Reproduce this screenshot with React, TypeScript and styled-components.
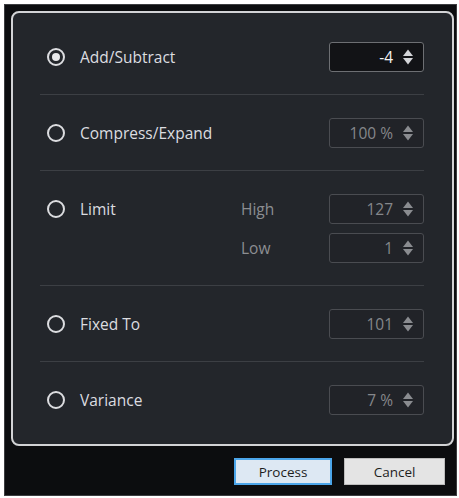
import React from 'react';
import styled, { createGlobalStyle } from 'styled-components';

const GlobalStyle = createGlobalStyle`
  html, body {
    margin: 0;
    padding: 0;
    background: #ffffff;
  }
  body {
    font-family: 'Open Sans', 'Noto Sans', sans-serif;
  }
`;

const Window = styled.div`
  box-sizing: border-box;
  margin: 4px 0 0 4px;
  width: 453px;
  height: 492px;
  background: #0c0d0f;
  border: 1px solid #3c3d40;
  padding: 6px 2px 0 6px;
  display: flex;
  flex-direction: column;
`;

const Panel = styled.div`
  box-sizing: border-box;
  height: 435px;
  background: #23262b;
  border: 2px solid #d2d3d5;
  border-radius: 8px;
  padding: 6px 28px 0 27px;
  display: flex;
  flex-direction: column;
`;

const Section = styled.div<{ $last?: boolean }>`
  display: flex;
  align-items: flex-start;
  padding: 23px 0 22px 0;
  border-bottom: ${p => (p.$last ? 'none' : '1px solid #3c3f44')};
`;

const Choice = styled.label`
  flex: 1;
  height: 30px;
  display: flex;
  align-items: center;
  gap: 15px;
  padding-left: 7px;
  font-size: 15.5px;
  color: #dcdde0;
`;

const Radio = styled.span<{ $checked?: boolean }>`
  box-sizing: border-box;
  width: 18px;
  height: 18px;
  border-radius: 50%;
  border: 2px solid #dcdde0;
  display: flex;
  align-items: center;
  justify-content: center;

  &::after {
    content: '';
    width: 8px;
    height: 8px;
    border-radius: 50%;
    background: ${p => (p.$checked ? '#e8e9eb' : 'transparent')};
  }
`;

const Fields = styled.div`
  display: grid;
  grid-template-columns: 88px 95px;
  row-gap: 9px;
  align-items: center;
`;

const FieldLabel = styled.span`
  font-size: 15.5px;
  color: #8c8e92;
`;

const Spin = styled.div<{ $active?: boolean }>`
  box-sizing: border-box;
  width: 95px;
  height: 30px;
  border-radius: 3px;
  border: 1px solid ${p => (p.$active ? '#6d6f73' : '#4a4c51')};
  background: ${p => (p.$active ? '#121316' : '#212328')};
  display: flex;
  align-items: center;
  justify-content: flex-end;
  gap: 10px;
  padding-right: 10px;
  font-size: 15.5px;
  color: ${p => (p.$active ? '#f2f2f2' : '#85878b')};
`;

const Arrows = styled.svg<{ $active?: boolean }>`
  width: 10px;
  height: 16px;
  fill: ${p => (p.$active ? '#d4d5d8' : '#8a8c90')};
`;

const Footer = styled.div`
  flex: 1;
  display: flex;
  justify-content: flex-end;
  align-items: flex-start;
  gap: 12px;
  padding: 12px 9px 0 0;
`;

const Button = styled.button<{ $primary?: boolean }>`
  box-sizing: border-box;
  width: ${p => (p.$primary ? '98px' : '101px')};
  height: 27px;
  font-family: 'Open Sans', 'Noto Sans', sans-serif;
  font-size: 13.5px;
  color: #1e1e1e;
  background: ${p => (p.$primary ? '#dde8f3' : '#e4e4e4')};
  border: ${p => (p.$primary ? '2px solid #4ca6ea' : '1px solid #bdbdbd')};
  border-radius: 0;
  padding: 0;
`;

const SpinArrows: React.FC<{ active?: boolean }> = ({ active }) => (
  <Arrows $active={active} viewBox="0 0 10 16">
    <polygon points="0,7 5,0.5 10,7" />
    <polygon points="0,9 10,9 5,15.5" />
  </Arrows>
);

const SpinBox: React.FC<{ value: string; active?: boolean }> = ({ value, active }) => (
  <Spin $active={active}>
    <span>{value}</span>
    <SpinArrows active={active} />
  </Spin>
);

export default function App() {
  return (
    <>
      <GlobalStyle />
      <Window>
        <Panel>
          <Section>
            <Choice>
              <Radio $checked />
              Add/Subtract
            </Choice>
            <SpinBox value="-4" active />
          </Section>
          <Section>
            <Choice>
              <Radio />
              Compress/Expand
            </Choice>
            <SpinBox value="100 %" />
          </Section>
          <Section>
            <Choice>
              <Radio />
              Limit
            </Choice>
            <Fields>
              <FieldLabel>High</FieldLabel>
              <SpinBox value="127" />
              <FieldLabel>Low</FieldLabel>
              <SpinBox value="1" />
            </Fields>
          </Section>
          <Section>
            <Choice>
              <Radio />
              Fixed To
            </Choice>
            <SpinBox value="101" />
          </Section>
          <Section $last>
            <Choice>
              <Radio />
              Variance
            </Choice>
            <SpinBox value="7 %" />
          </Section>
        </Panel>
        <Footer>
          <Button $primary>Process</Button>
          <Button>Cancel</Button>
        </Footer>
      </Window>
    </>
  );
}
